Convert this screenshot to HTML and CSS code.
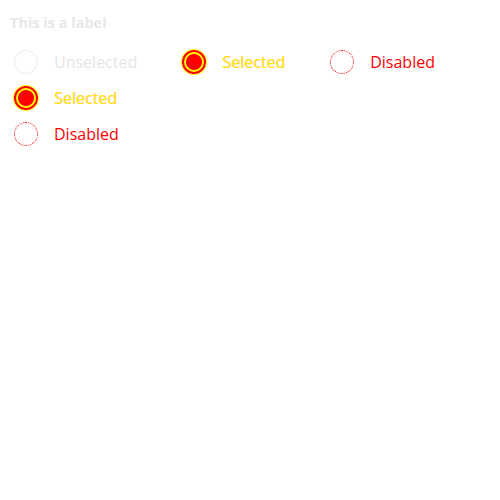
FILE: index.html
```html
<!DOCTYPE html>
<html>
<head>
<meta charset="utf-8">
<link rel="stylesheet" href="styles.css">
</head>
<body>
<div class="page">
  <div class="label">This is a label</div>
  <div class="group horizontal">
    <label class="item"><span class="radio unselected"></span><span class="text unselected-text">Unselected</span></label>
    <label class="item"><span class="radio selected"></span><span class="text selected-text">Selected</span></label>
    <label class="item"><span class="radio disabled"></span><span class="text disabled-text">Disabled</span></label>
  </div>
  <div class="group vertical">
    <label class="item"><span class="radio selected"></span><span class="text selected-text">Selected</span></label>
    <label class="item"><span class="radio disabled"></span><span class="text disabled-text">Disabled</span></label>
  </div>
</div>
</body>
</html>
```
FILE: styles.css
```css
html, body { margin: 0; padding: 0; background: #fff; }
.page {
  padding: 10px;
  font-family: "Open Sans", "Noto Sans", sans-serif;
}
.label {
  font-size: 14.5px;
  font-weight: 700;
  color: #e8e8e8;
  line-height: 22px;
  margin-top: 2px;
  margin-bottom: 16px;
}
.group { display: flex; }
.group.horizontal { flex-direction: row; margin-bottom: 12px; }
.group.vertical { flex-direction: column; gap: 12px; }
.item {
  display: flex;
  align-items: center;
  gap: 16px;
  padding-left: 4px;
  margin-right: 41px;
  height: 24px;
}
.radio {
  box-sizing: border-box;
  width: 24px;
  height: 24px;
  border-radius: 50%;
  flex: none;
}
.radio.unselected { border: 1px solid #ececec; }
.radio.selected {
  border: 2px solid #ff0000;
  background: radial-gradient(circle, #ff0000 0 7.5px, #ffff00 8.5px);
  box-shadow: 0 0 0 1px #ffff00;
}
.radio.disabled { border: 1px dotted #ff0000; }
.text { font-size: 16px; line-height: 24px; }
.unselected-text { color: #e6e6e6; }
.selected-text { color: #ffe600; text-shadow: 0.4px 0.4px 0 rgba(255,0,0,0.35); }
.disabled-text { color: #ff0000; }
```
